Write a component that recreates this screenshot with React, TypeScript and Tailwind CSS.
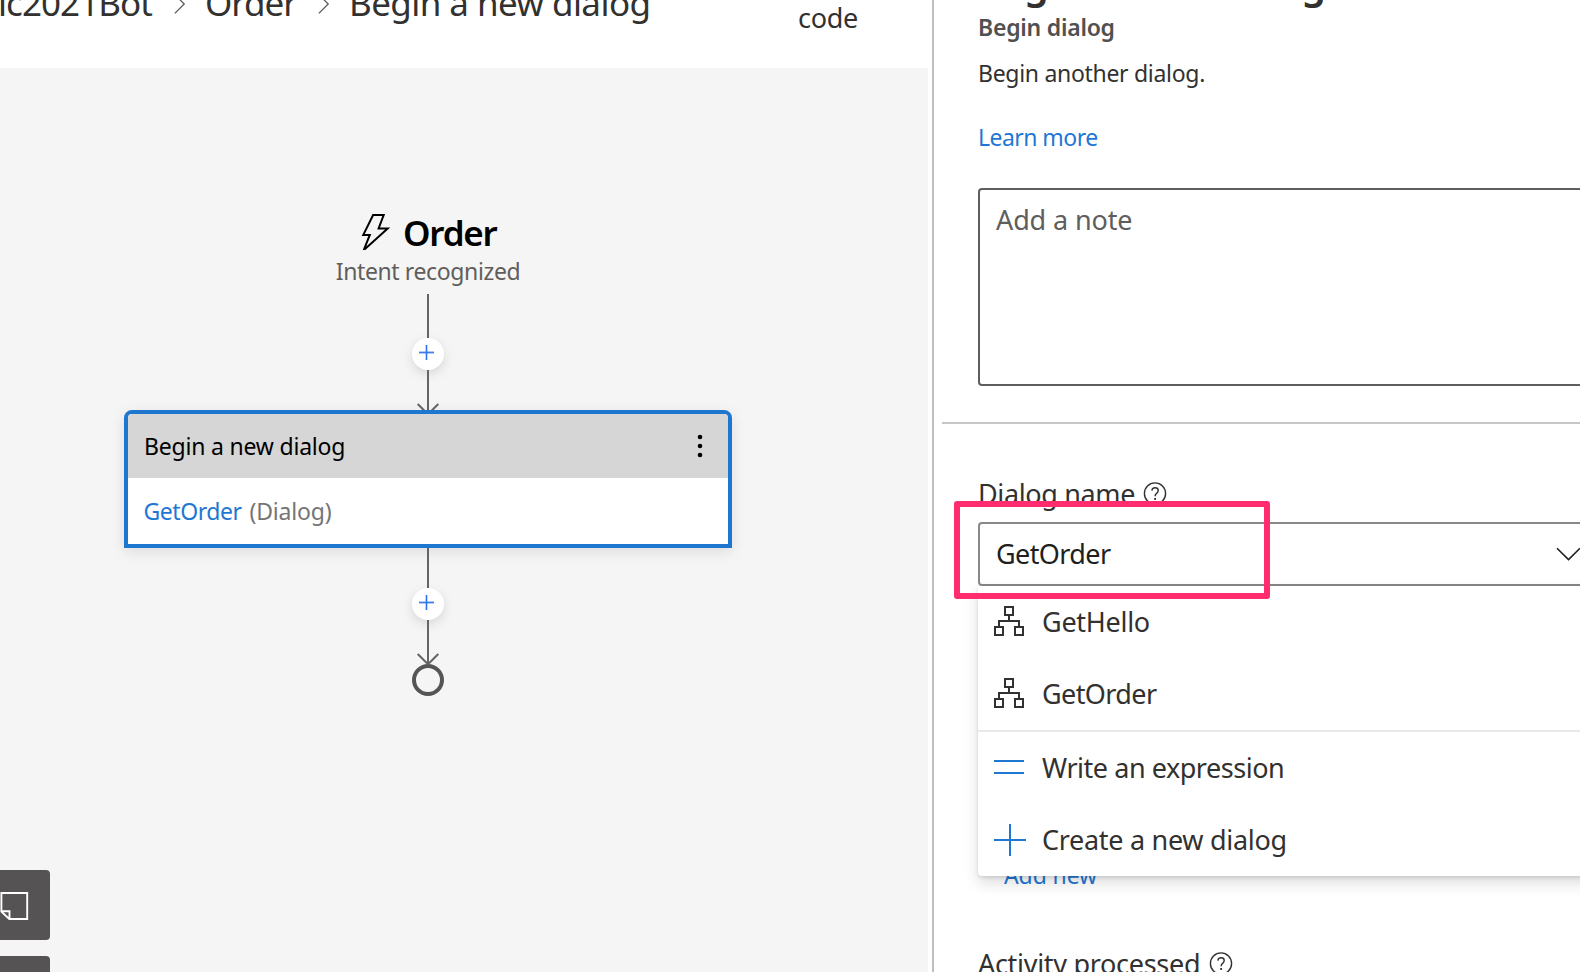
import type { ReactNode } from "react";

function BreadcrumbChevron() {
  return (
    <svg className="mt-0.5 shrink-0" width="12" height="22" viewBox="0 0 12 22" fill="none" stroke="#605e5c" strokeWidth="1.3">
      <path d="M0.8 1.6 10.2 11 0.8 20.4" />
    </svg>
  );
}

function HelpIcon() {
  return (
    <svg className="shrink-0" width="24" height="24" viewBox="0 0 24 24" fill="none" stroke="#323130" strokeWidth="1.4">
      <circle cx="12" cy="11.5" r="10.6" />
      <path d="M8.9 8.6c.1-1.9 1.4-2.9 3.2-2.9s3.1 1.1 3.1 2.7c0 1.4-.7 2.1-1.6 3-1 .8-1.5 1.4-1.5 2.9" />
      <path d="M12.1 16.1v1.9" strokeWidth="1.7" />
    </svg>
  );
}

function AddStep() {
  return (
    <div className="flex size-8 items-center justify-center rounded-full bg-white shadow-[0_4px_12px_rgba(0,0,0,0.12)]">
      <svg className="-mt-[3px] mr-[3px]" width="15" height="15" viewBox="0 0 15 15" fill="none">
        <path d="M0 7.5h15" stroke="#3f7fe8" strokeWidth="1.8" />
        <path d="M7.5 0v15" stroke="#2f6ff2" strokeWidth="1.6" />
      </svg>
    </div>
  );
}

function DialogIcon() {
  return (
    <svg className="-mt-0.5" width="30" height="30" viewBox="0 0 30 30" fill="none" stroke="#323130" strokeWidth="2">
      <path d="M11 1h8v8h-8zM1 21h8v8H1zM21 21h8v8h-8zM15 9v6M5 21v-6h20v6" />
    </svg>
  );
}

function EqualsIcon() {
  return (
    <svg width="30" height="30" viewBox="0 0 30 30" fill="none" stroke="#1f77d4" strokeWidth="2">
      <path d="M0 8h30M0 20h30" />
    </svg>
  );
}

function PlusIcon() {
  return (
    <svg width="32" height="32" viewBox="0 0 32 32" fill="none" stroke="#1f77d4" strokeWidth="2">
      <path d="M0 16h32M16 0v32" />
    </svg>
  );
}

function MenuItem({ icon, children }: { icon: ReactNode; children: ReactNode }) {
  return (
    <div className="flex h-[72px] items-center pl-4">
      <div className="flex w-12 shrink-0 items-center">{icon}</div>
      {children}
    </div>
  );
}

function FlowCanvas() {
  return (
    <div className="flex h-[904px] w-[928px] flex-col bg-[#f5f5f5]">
      <div className="flex w-[856px] flex-col items-center pt-[141px]">
        <div className="flex h-12 w-[134px] items-center text-black">
          <svg className="-mt-0.5 mr-3 shrink-0" width="30" height="38" viewBox="0 0 30 38" fill="none" stroke="currentColor" strokeWidth="2">
            <path d="M12.1 2h10.6l-5.1 13.4h9.1L4 36H3.2l5.6-14.1H2.3z" />
          </svg>
          <span className="text-[35px] leading-[48px] font-semibold tracking-[-1.2px]">Order</span>
        </div>
        <div className="-mt-px h-[30px] text-[23px] leading-[30px] tracking-[-0.38px] text-[#605e5c]">Intent recognized</div>
        <div className="mt-2 h-11 w-0.5 bg-[#656565]" />
        <AddStep />
        <svg width="24" height="40" viewBox="0 0 24 40" fill="none" stroke="#656565" strokeWidth="2">
          <path d="M12 0v40M1.7 34 12 44.3 22.3 34" />
        </svg>
        <div className="h-[138px] w-[608px] overflow-hidden rounded-t-lg border-4 border-[#1f76cf] bg-white shadow-[0_4px_14px_rgba(0,0,0,0.10)]">
          <div className="flex h-16 items-center justify-between bg-[#d6d6d6] pr-[25px] pl-4 text-black">
            <span className="text-[23px] leading-8 tracking-[-0.2px]">Begin a new dialog</span>
            <svg width="6" height="24" viewBox="0 0 6 24" fill="currentColor">
              <circle cx="3" cy="3" r="2.3" />
              <circle cx="3" cy="12" r="2.3" />
              <circle cx="3" cy="21" r="2.3" />
            </svg>
          </div>
          <div className="flex h-[66px] items-center gap-2 pl-[15.5px] text-[23px] leading-8">
            <span className="tracking-[-0.45px] text-[#1f77d4]">GetOrder</span>
            <span className="tracking-[-0.2px] text-[#757575]">(Dialog)</span>
          </div>
        </div>
        <div className="h-10 w-0.5 bg-[#656565]" />
        <AddStep />
        <svg width="24" height="44" viewBox="0 0 24 44" fill="none" stroke="#656565" strokeWidth="2">
          <path d="M12 0v44M1.7 34 12 44.3 22.3 34" />
        </svg>
        <div className="size-8 rounded-full border-4 border-[#555555]" />
      </div>
      <div className="mt-[174px] flex h-[70px] w-[50px] shrink-0 items-center rounded-r bg-[#555354]">
        <svg className="mt-px" width="30" height="30" viewBox="0 0 30 30" fill="none" stroke="white" strokeWidth="1.9">
          <path d="M1.4 2h25.8v26H9.3L1.4 20.6zM1.4 20.2h8.1V28" />
        </svg>
      </div>
      <div className="mt-4 h-4 w-[50px] shrink-0 rounded-tr bg-[#555354]" />
    </div>
  );
}

function TopBar() {
  return (
    <div className="flex h-[68px] w-[928px] overflow-hidden text-[#323130]">
      <div className="-mt-[21px] flex h-12 w-[795px] shrink-0 items-center text-[35px] leading-[48px] whitespace-nowrap">
        <div className="-ml-[2px] w-[176px] shrink-0 tracking-[-0.95px]">lc2021Bot</div>
        <div className="w-[31px] shrink-0"><BreadcrumbChevron /></div>
        <div className="w-[113px] shrink-0 tracking-[-1.05px]">Order</div>
        <div className="w-[31px] shrink-0"><BreadcrumbChevron /></div>
        <div className="tracking-[-0.57px]">Begin a new dialog</div>
      </div>
      <div className="-mt-[24px] w-[66px] text-center text-[27px] leading-7 tracking-[-0.3px]">
        <div>Show</div>
        <div>code</div>
      </div>
    </div>
  );
}

function Properties() {
  return (
    <div className="h-[972px] w-[648px] shrink-0 overflow-hidden border-l-2 border-[#bfbfbf] bg-white text-[#323130]">
      <div className="-mt-[41px] flex w-[700px] flex-col whitespace-nowrap">
        <div className="pl-[43px]">
          <div className="h-12 text-[39px] leading-[48px] font-semibold tracking-[-0.6px]">Begin a new dialog</div>
          <div className="mt-1 h-8 pl-[1px] text-[23px] leading-8 font-semibold tracking-[-0.24px] text-[#505050]">Begin dialog</div>
          <div className="mt-3.5 h-8 pl-[1px] text-[23px] leading-8 tracking-[-0.3px]">Begin another dialog.</div>
          <div className="mt-8 h-8 pl-[1px] text-[23px] leading-8 tracking-[-0.55px] text-[#1f77d4]">Learn more</div>
        </div>
        <div className="mt-[35px] ml-11 h-[198px] rounded border-2 border-[#605e5c] pt-3 pl-4 text-[27px] leading-9 tracking-[-0.12px] text-[#605e5c]">
          Add a note
        </div>
        <div className="mt-9 ml-2 h-0.5 bg-[#c6c6c6]" />
        <div className="mt-[51px] ml-11 flex h-[38px] items-center">
          <span className="w-[165px] text-[27px] leading-9 tracking-[-0.36px]">Dialog name</span>
          <HelpIcon />
        </div>
        <div className="relative mt-[9px] ml-11">
          <div className="flex h-16 items-center rounded border-2 border-[#8a8886] pl-4 text-[27px] leading-9 text-[#201f1e]">
            <span className="w-[560px] tracking-[-0.6px]">GetOrder</span>
            <svg className="shrink-0" width="26" height="14" viewBox="0 0 26 14" fill="none" stroke="#201f1e" strokeWidth="1.6">
              <path d="M1 1.2 12.5 12.6 24 1.2" />
            </svg>
          </div>
          <div className="absolute top-16 right-0 left-0 rounded-b bg-white text-[27px] leading-9 shadow-[0_6.4px_14.4px_rgba(0,0,0,0.132),0_1.2px_3.6px_rgba(0,0,0,0.108)]">
            <MenuItem icon={<DialogIcon />}>
              <span className="tracking-[-0.28px]">GetHello</span>
            </MenuItem>
            <MenuItem icon={<DialogIcon />}>
              <span className="tracking-[-0.6px]">GetOrder</span>
            </MenuItem>
            <div className="h-0.5 bg-[#eaeaea]" />
            <MenuItem icon={<EqualsIcon />}>
              <span className="tracking-[-0.46px]">Write an expression</span>
            </MenuItem>
            <MenuItem icon={<PlusIcon />}>
              <span className="tracking-[-0.3px]">Create a new dialog</span>
            </MenuItem>
          </div>
          <div className="absolute -top-[21px] -left-6 h-[98px] w-[316px] rounded-[3px] border-6 border-[#ff2d6d]" />
        </div>
        <div className="mt-[273px] h-8 pl-[70px] text-[23px] leading-8 tracking-[-0.1px] text-[#1f77d4]">Add new</div>
        <div className="mt-[54px] ml-11 flex h-[38px] items-center">
          <span className="w-[231px] text-[27px] leading-9 tracking-[-0.3px]">Activity processed</span>
          <HelpIcon />
        </div>
      </div>
    </div>
  );
}

export default function App() {
  return (
    <div className="flex h-[972px] w-[1580px] overflow-hidden bg-white font-['Noto_Sans','Open_Sans',sans-serif]">
      <div className="w-[932px] shrink-0 overflow-hidden">
        <TopBar />
        <FlowCanvas />
      </div>
      <Properties />
    </div>
  );
}
